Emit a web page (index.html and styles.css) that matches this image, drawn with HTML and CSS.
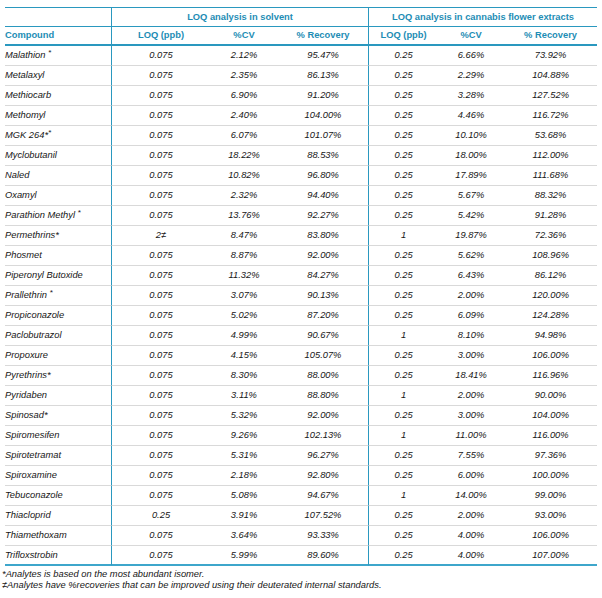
FILE: index.html
```html
<!DOCTYPE html>
<html lang="en">
<head>
<meta charset="utf-8">
<title>LOQ analysis</title>
<link rel="stylesheet" href="styles.css">
</head>
<body>
<table class="loq">
  <colgroup>
    <col class="c-name"><col class="c-loq1"><col class="c-cv1"><col class="c-rec1"><col class="c-loq2"><col class="c-cv2"><col class="c-rec2">
  </colgroup>
  <thead>
    <tr class="group-row">
      <th class="blank"></th>
      <th class="group div" colspan="3">LOQ analysis in solvent</th>
      <th class="group div" colspan="3">LOQ analysis in cannabis flower extracts</th>
    </tr>
    <tr class="head-row">
      <th class="name">Compound</th>
      <th class="div">LOQ (ppb)</th>
      <th>%CV</th>
      <th>% Recovery</th>
      <th class="div">LOQ (ppb)</th>
      <th>%CV</th>
      <th>% Recovery</th>
    </tr>
  </thead>
  <tbody>
    <tr><td class="name">Malathion <sup>*</sup></td><td class="div">0.075</td><td>2.12%</td><td>95.47%</td><td class="div">0.25</td><td>6.66%</td><td>73.92%</td></tr>
    <tr><td class="name">Metalaxyl</td><td class="div">0.075</td><td>2.35%</td><td>86.13%</td><td class="div">0.25</td><td>2.29%</td><td>104.88%</td></tr>
    <tr><td class="name">Methiocarb</td><td class="div">0.075</td><td>6.90%</td><td>91.20%</td><td class="div">0.25</td><td>3.28%</td><td>127.52%</td></tr>
    <tr><td class="name">Methomyl</td><td class="div">0.075</td><td>2.40%</td><td>104.00%</td><td class="div">0.25</td><td>4.46%</td><td>116.72%</td></tr>
    <tr><td class="name">MGK 264*<sup>*</sup></td><td class="div">0.075</td><td>6.07%</td><td>101.07%</td><td class="div">0.25</td><td>10.10%</td><td>53.68%</td></tr>
    <tr><td class="name">Myclobutanil</td><td class="div">0.075</td><td>18.22%</td><td>88.53%</td><td class="div">0.25</td><td>18.00%</td><td>112.00%</td></tr>
    <tr><td class="name">Naled</td><td class="div">0.075</td><td>10.82%</td><td>96.80%</td><td class="div">0.25</td><td>17.89%</td><td>111.68%</td></tr>
    <tr><td class="name">Oxamyl</td><td class="div">0.075</td><td>2.32%</td><td>94.40%</td><td class="div">0.25</td><td>5.67%</td><td>88.32%</td></tr>
    <tr><td class="name">Parathion Methyl <sup>*</sup></td><td class="div">0.075</td><td>13.76%</td><td>92.27%</td><td class="div">0.25</td><td>5.42%</td><td>91.28%</td></tr>
    <tr><td class="name">Permethrins*</td><td class="div">2≠</td><td>8.47%</td><td>83.80%</td><td class="div">1</td><td>19.87%</td><td>72.36%</td></tr>
    <tr><td class="name">Phosmet</td><td class="div">0.075</td><td>8.87%</td><td>92.00%</td><td class="div">0.25</td><td>5.62%</td><td>108.96%</td></tr>
    <tr><td class="name">Piperonyl Butoxide</td><td class="div">0.075</td><td>11.32%</td><td>84.27%</td><td class="div">0.25</td><td>6.43%</td><td>86.12%</td></tr>
    <tr><td class="name">Prallethrin <sup>*</sup></td><td class="div">0.075</td><td>3.07%</td><td>90.13%</td><td class="div">0.25</td><td>2.00%</td><td>120.00%</td></tr>
    <tr><td class="name">Propiconazole</td><td class="div">0.075</td><td>5.02%</td><td>87.20%</td><td class="div">0.25</td><td>6.09%</td><td>124.28%</td></tr>
    <tr><td class="name">Paclobutrazol</td><td class="div">0.075</td><td>4.99%</td><td>90.67%</td><td class="div">1</td><td>8.10%</td><td>94.98%</td></tr>
    <tr><td class="name">Propoxure</td><td class="div">0.075</td><td>4.15%</td><td>105.07%</td><td class="div">0.25</td><td>3.00%</td><td>106.00%</td></tr>
    <tr><td class="name">Pyrethrins*</td><td class="div">0.075</td><td>8.30%</td><td>88.00%</td><td class="div">0.25</td><td>18.41%</td><td>116.96%</td></tr>
    <tr><td class="name">Pyridaben</td><td class="div">0.075</td><td>3.11%</td><td>88.80%</td><td class="div">1</td><td>2.00%</td><td>90.00%</td></tr>
    <tr><td class="name">Spinosad*</td><td class="div">0.075</td><td>5.32%</td><td>92.00%</td><td class="div">0.25</td><td>3.00%</td><td>104.00%</td></tr>
    <tr><td class="name">Spiromesifen</td><td class="div">0.075</td><td>9.26%</td><td>102.13%</td><td class="div">1</td><td>11.00%</td><td>116.00%</td></tr>
    <tr><td class="name">Spirotetramat</td><td class="div">0.075</td><td>5.31%</td><td>96.27%</td><td class="div">0.25</td><td>7.55%</td><td>97.36%</td></tr>
    <tr><td class="name">Spiroxamine</td><td class="div">0.075</td><td>2.18%</td><td>92.80%</td><td class="div">0.25</td><td>6.00%</td><td>100.00%</td></tr>
    <tr><td class="name">Tebuconazole</td><td class="div">0.075</td><td>5.08%</td><td>94.67%</td><td class="div">1</td><td>14.00%</td><td>99.00%</td></tr>
    <tr><td class="name">Thiacloprid</td><td class="div">0.25</td><td>3.91%</td><td>107.52%</td><td class="div">0.25</td><td>2.00%</td><td>93.00%</td></tr>
    <tr><td class="name">Thiamethoxam</td><td class="div">0.075</td><td>3.64%</td><td>93.33%</td><td class="div">0.25</td><td>4.00%</td><td>106.00%</td></tr>
    <tr class="last"><td class="name">Trifloxstrobin</td><td class="div">0.075</td><td>5.99%</td><td>89.60%</td><td class="div">0.25</td><td>4.00%</td><td>107.00%</td></tr>
  </tbody>
</table>
<div class="notes">
  <p>*Analytes is based on the most abundant isomer.</p>
  <p>≠Analytes have %recoveries that can be improved using their deuterated internal standards.</p>
</div>
</body>
</html>
```
FILE: styles.css
```css
html, body {
  margin: 0;
  padding: 0;
  background: #ffffff;
}

body {
  font-family: "Liberation Sans", Arial, sans-serif;
  font-size: 9.33px;
  color: #161616;
}

.loq {
  margin: 7px 0 0 5px;
  width: 592px;
  table-layout: fixed;
  border-collapse: separate;
  border-spacing: 0;
}

.c-name { width: 106px; }
.c-loq1 { width: 99px; }
.c-cv1 { width: 68px; }
.c-rec1 { width: 90px; }
.c-loq2 { width: 70px; }
.c-cv2 { width: 66px; }
.c-rec2 { width: 93px; }

.loq th,
.loq td {
  padding: 0;
  text-align: center;
  vertical-align: middle;
  line-height: 11px;
  white-space: nowrap;
}

.loq th {
  color: #1d8db5;
  font-weight: bold;
}

.loq td {
  font-style: italic;
  border-bottom: 1px solid #d9d9d9;
}

.loq .name {
  text-align: left;
}

.loq .div {
  border-left: 1px solid #2a98bf;
}

.group-row {
  height: 20px;
}

.group-row th {
  border-top: 1px solid #2a98bf;
  border-bottom: 1px solid #2a98bf;
}

.head-row {
  height: 19px;
}

.head-row th {
  border-bottom: 2px solid #2a98bf;
}

.loq tbody tr {
  height: 20px;
}

.loq tbody tr.last td {
  border-bottom: 2px solid #3ea6cb;
}

.loq sup {
  font-size: 8px;
  line-height: 0;
  vertical-align: 3px;
}

.notes {
  margin: 3px 0 0 2px;
}

.notes p {
  margin: 0;
  font-style: italic;
  line-height: 11px;
  color: #161616;
}
```
